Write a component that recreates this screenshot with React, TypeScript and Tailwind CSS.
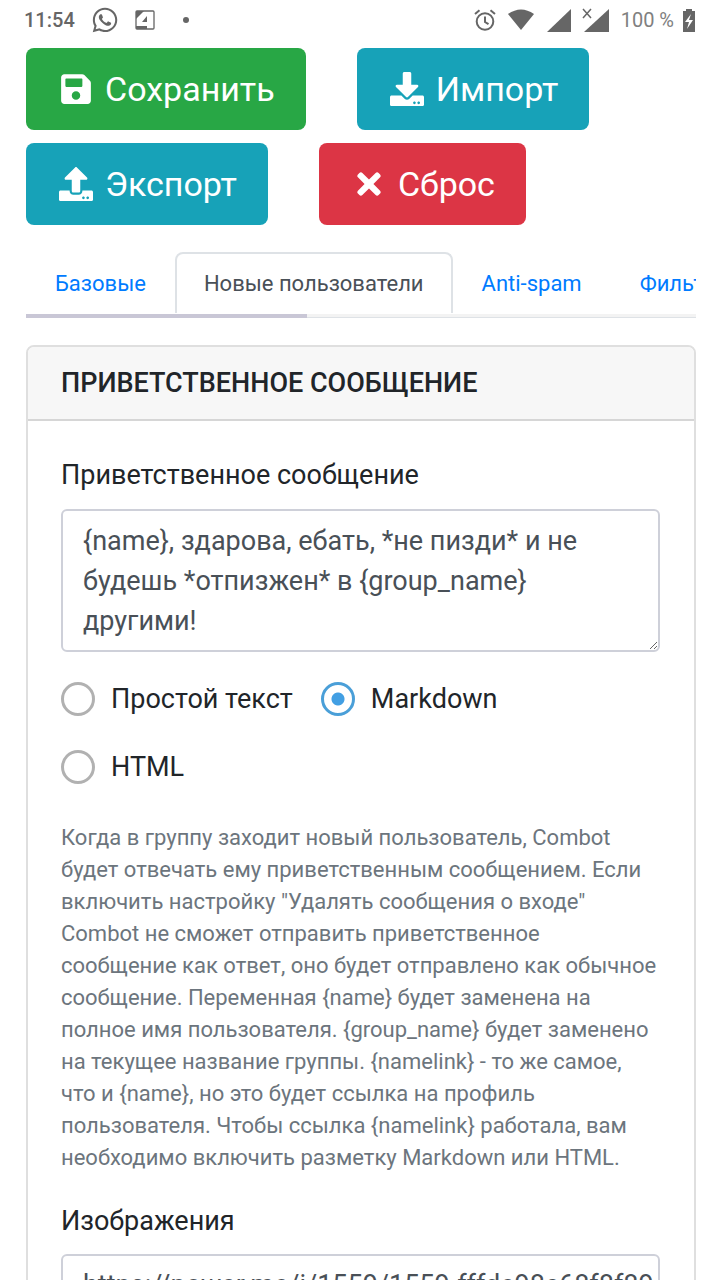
import { useState } from 'react'
import { FaDownload, FaSave, FaTimes, FaUpload, FaWhatsapp } from 'react-icons/fa'

const tabs = ['Базовые', 'Новые пользователи', 'Anti-spam', 'Фильтры']
const formats = ['Простой текст', 'Markdown', 'HTML']

const helpText =
  'Когда в группу заходит новый пользователь, Combot будет отвечать ему приветственным сообщением. Если включить настройку "Удалять сообщения о входе" Combot не сможет отправить приветственное\nсообщение как ответ, оно будет отправлено как обычное сообщение. Переменная {name} будет заменена на полное имя пользователя. {group_name} будет заменено на текущее название группы. {namelink} - то же самое, что и {name}, но это будет ссылка на профиль пользователя. Чтобы ссылка {namelink} работала, вам необходимо включить разметку Markdown или HTML.'

export default function App() {
  return (
    <div className="h-screen overflow-hidden bg-white font-['Roboto','Noto_Sans',sans-serif] text-[#212529]">
      <StatusBar />
      <main className="pl-[26px] pr-6 pt-2">
        <Toolbar />
        <Tabs />
        <WelcomeCard />
      </main>
    </div>
  )
}

function StatusBar() {
  return (
    <header className="flex h-10 items-center justify-between px-6 text-[#666]">
      <div className="flex items-center">
        <span className="text-xl font-medium">11:54</span>
        <FaWhatsapp className="ml-4 size-7" />
        <svg className="ml-4 size-5" viewBox="0 0 20 20" fill="none">
          <rect x="1" y="1" width="18" height="18" rx="1" stroke="currentColor" strokeWidth="1.3" />
          <path d="M1 1h8L1 9zM1 16h11v3H1zM7 12l5-6v6z" fill="currentColor" />
        </svg>
        <span className="ml-7 size-[6px] rounded-full bg-[#666]" />
      </div>
      <div className="flex items-center">
        <svg className="size-[22px]" viewBox="0 0 22 22" fill="none" stroke="currentColor" strokeWidth="2">
          <circle cx="11" cy="12.5" r="8.3" />
          <path d="M11 7.5v5.5l3.5 2.2M1 5l4.5-3.8M21 5l-4.5-3.8" />
        </svg>
        <svg className="ml-[11px] h-[22px] w-7" viewBox="0 0 28 22" fill="currentColor">
          <path d="M1 5Q14-4 27 5L14 21z" />
        </svg>
        <svg className="ml-[11px] size-[25px]" viewBox="0 0 25 25" fill="currentColor">
          <path d="M25 1v23H1z" />
        </svg>
        <svg className="ml-[11px] h-[25px] w-[27px]" viewBox="0 0 27 25" fill="none">
          <path d="M27 1v23H2z" fill="currentColor" />
          <path d="M1 1l8 9M9 1l-8 9" stroke="currentColor" strokeWidth="1.5" />
        </svg>
        <span className="ml-3 text-xl text-[#808080]">100 %</span>
        <svg className="ml-2 h-[23px] w-[14px]" viewBox="0 0 14 23">
          <path d="M4 0h6v2h3v21H1V2h3z" fill="currentColor" />
          <path d="M9 5L3 13h4l-2 7 6-9H7z" fill="#fff" />
        </svg>
      </div>
    </header>
  )
}

function Toolbar() {
  const button = 'flex h-[82px] items-center rounded-lg pl-[30px] pr-[31px] text-[34px] text-white'
  const icon = 'ml-[3px] mr-3 size-[34px]'

  return (
    <div className="flex flex-wrap gap-x-[51px] gap-y-[13px]">
      <button type="button" className={`${button} bg-[#28a745]`}>
        <FaSave className={icon} />
        Сохранить
      </button>
      <button type="button" className={`${button} bg-[#17a2b8]`}>
        <FaDownload className={icon} />
        Импорт
      </button>
      <button type="button" className={`${button} bg-[#17a2b8]`}>
        <FaUpload className={icon} />
        Экспорт
      </button>
      <button type="button" className={`${button} bg-[#dc3545]`}>
        <FaTimes className={icon} />
        Сброс
      </button>
    </div>
  )
}

function Tabs() {
  const [active, setActive] = useState(1)

  return (
    <nav className="mt-[27px] overflow-hidden">
      <div className="flex">
        {tabs.map((tab, i) => (
          <button
            key={tab}
            type="button"
            onClick={() => setActive(i)}
            className={`h-[61px] shrink-0 rounded-t-lg border-2 border-b-0 px-[27px] pb-px text-[22px] ${
              i === active ? 'border-[#dee2e6] text-[#495057]' : 'border-transparent text-[#007bff]'
            }`}
          >
            {tab}
          </button>
        ))}
      </div>
      {/* Scroll track */}
      <div className="mt-px h-1 border-b border-[#dee2e6] bg-[#f3f3f3]">
        <div className="h-1 w-[42%] bg-[#c9c7d6]" />
      </div>
    </nav>
  )
}

function WelcomeCard() {
  const [format, setFormat] = useState('Markdown')
  const field = 'block w-full rounded-md border-2 border-[#ced0d9] bg-white pl-5 text-[27px] leading-10 text-[#495057]'

  return (
    <section className="mt-[27px] rounded-lg border-2 border-[#dfdfdf]">
      <h2 className="rounded-t-md border-b-2 border-[#d6d6d6] bg-[#f7f7f7] px-[33px] py-4 text-[27px] font-medium leading-10">
        ПРИВЕТСТВЕННОЕ СООБЩЕНИЕ
      </h2>
      <div className="pb-9 pl-[33px] pr-[34px] pt-[34px]">
        <label htmlFor="welcome" className="mb-[14px] block text-[27px] leading-10">
          Приветственное сообщение
        </label>
        <textarea
          id="welcome"
          rows={3}
          className={`${field} resize-y pb-[9px] pr-5 pt-[10px]`}
          defaultValue="{name}, здарова, ебать, *не пизди* и не будешь *отпизжен* в {group_name} другими!"
        />
        <div className="mt-[27px] flex flex-wrap gap-y-7">
          {formats.map((name) => (
            <label key={name} className="mr-7 flex items-center text-[27px] leading-10">
              <input
                type="radio"
                name="format"
                checked={format === name}
                onChange={() => setFormat(name)}
                className="mr-4 size-[34px] appearance-none rounded-full border-3 border-[#b1b1b1] checked:border-[#4a9fd8] checked:bg-[radial-gradient(circle,#429fe3_6px,transparent_7px)]"
              />
              {name}
            </label>
          ))}
        </div>
        <p className="mt-[35px] whitespace-pre-line text-[22px] leading-8 text-[#6c757d]">{helpText}</p>
        <label htmlFor="images" className="mb-[13px] mt-[27px] block text-[27px] leading-10">
          Изображения
        </label>
        <input
          id="images"
          type="text"
          className={`${field} h-[62px]`}
          defaultValue="https://power.me/i/1559/1559-fffde98c68f8f89"
        />
      </div>
    </section>
  )
}
